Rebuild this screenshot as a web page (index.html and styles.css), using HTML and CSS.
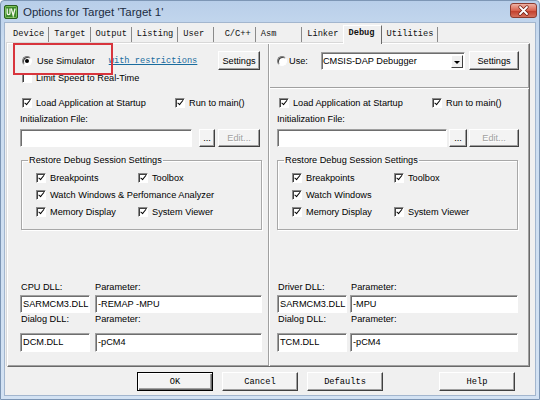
FILE: index.html
```html
<!DOCTYPE html>
<html>
<head>
<meta charset="utf-8">
<title>Options for Target 'Target 1'</title>
<link rel="stylesheet" href="styles.css">
</head>
<body>
<div class="window">
  <div class="titlebar">
    <svg class="app-icon" viewBox="0 0 14 14" width="14" height="14">
      <rect x="0.5" y="0.5" width="13" height="13" rx="1.5" fill="#3f8a2e" stroke="#2b5f1f"/>
      <rect x="1.5" y="1.5" width="11" height="11" rx="1" fill="none" stroke="#8fd06a" stroke-width="0.8"/>
      <path d="M3.2 3.5 V8.2 Q3.2 9.6 4.6 9.6 Q6 9.6 6 8.2 V3.5" fill="none" stroke="#f4f8e8" stroke-width="1.3"/>
      <path d="M7.3 3.5 L9.2 10.5 L11.1 3.5" fill="none" stroke="#f4f8e8" stroke-width="1.3"/>
    </svg>
    <span class="title">Options for Target 'Target 1'</span>
    <span class="close-btn">
      <svg viewBox="0 0 27 15" width="27" height="15">
        <path d="M10 4 L17 11 M17 4 L10 11" stroke="#6b1d14" stroke-width="3.2" stroke-linecap="round"/>
        <path d="M10 4 L17 11 M17 4 L10 11" stroke="#ffffff" stroke-width="1.8" stroke-linecap="round"/>
      </svg>
    </span>
  </div>

  <div class="client">
    <div class="tabs">
      <span class="tab tab-first">Device</span>
      <span class="tab">Target</span>
      <span class="tab">Output</span>
      <span class="tab">Listing</span>
      <span class="tab">User&nbsp;</span>
      <span class="tab">&nbsp;C/C++</span>
      <span class="tab">Asm&nbsp;&nbsp;&nbsp;&nbsp;</span>
      <span class="tab tab-prev">Linker</span>
      <span class="tab tab-active">Debug</span>
      <span class="tab">Utilities</span>
    </div>

    <div class="panel">
      <div class="col col-left">
        <div class="row top-row">
          <span class="opt"><span class="radio on"></span>Use Simulator</span>
          <span class="link">with restrictions</span>
          <button class="btn settings-l">Settings</button>
        </div>
        <div class="row limit-row">
          <span class="opt-chk"><span class="check off"></span>Limit Speed to Real-Time</span>
        </div>
        <div class="row load-row">
          <span class="opt-chk first-chk"><span class="check"></span>Load Application at Startup</span>
          <span class="opt-chk"><span class="check"></span>Run to main()</span>
        </div>
        <div class="row label-row">Initialization File:</div>
        <div class="row file-row file-l">
          <span class="field grow"></span>
          <button class="btn browse">...</button>
          <button class="btn edit" disabled>Edit...</button>
        </div>
        <fieldset class="group">
          <legend>Restore Debug Session Settings</legend>
          <div class="group-grid">
            <span class="opt-chk"><span class="check"></span>Breakpoints</span>
            <span class="opt-chk"><span class="check"></span>Toolbox</span>
            <span class="opt-chk span2"><span class="check"></span>Watch Windows &amp; Perfomance Analyzer</span>
            <span class="opt-chk"><span class="check"></span>Memory Display</span>
            <span class="opt-chk"><span class="check"></span>System Viewer</span>
          </div>
        </fieldset>
        <div class="dll dll-l">
          <span class="lbl">CPU DLL:</span>
          <span class="lbl">Parameter:</span>
          <span class="field f1">SARMCM3.DLL</span>
          <span class="field f1">-REMAP -MPU</span>
          <span class="lbl">Dialog DLL:</span>
          <span class="lbl">Parameter:</span>
          <span class="field f2">DCM.DLL</span>
          <span class="field f2">-pCM4</span>
        </div>
      </div>

      <div class="vsep"></div>

      <div class="col col-right">
        <div class="row top-row">
          <span class="opt opt-use"><span class="radio"></span>Use:</span>
          <span class="combo"><span class="combo-text">CMSIS-DAP Debugger</span><span class="combo-btn"></span></span>
          <button class="btn settings-r">Settings</button>
        </div>
        <div class="hsep"></div>
        <div class="row load-row">
          <span class="opt-chk first-chk"><span class="check"></span>Load Application at Startup</span>
          <span class="opt-chk"><span class="check"></span>Run to main()</span>
        </div>
        <div class="row label-row">Initialization File:</div>
        <div class="row file-row file-r">
          <span class="field grow"></span>
          <button class="btn browse">...</button>
          <button class="btn edit" disabled>Edit...</button>
        </div>
        <fieldset class="group">
          <legend>Restore Debug Session Settings</legend>
          <div class="group-grid">
            <span class="opt-chk"><span class="check"></span>Breakpoints</span>
            <span class="opt-chk"><span class="check"></span>Toolbox</span>
            <span class="opt-chk span2"><span class="check"></span>Watch Windows</span>
            <span class="opt-chk"><span class="check"></span>Memory Display</span>
            <span class="opt-chk"><span class="check"></span>System Viewer</span>
          </div>
        </fieldset>
        <div class="dll dll-r">
          <span class="lbl">Driver DLL:</span>
          <span class="lbl">Parameter:</span>
          <span class="field f1">SARMCM3.DLL</span>
          <span class="field f1">-MPU</span>
          <span class="lbl">Dialog DLL:</span>
          <span class="lbl">Parameter:</span>
          <span class="field f2">TCM.DLL</span>
          <span class="field f2">-pCM4</span>
        </div>
      </div>

      <div class="highlight"></div>
    </div>

    <div class="buttons">
      <button class="btn dlg-btn default">OK</button>
      <button class="btn dlg-btn">Cancel</button>
      <button class="btn dlg-btn">Defaults</button>
      <button class="btn dlg-btn help">Help</button>
    </div>
  </div>
</div>
</body>
</html>
```

FILE: styles.css
```css
html, body {
  margin: 0;
  padding: 0;
  background: #ffffff;
}

.window {
  width: 540px;
  height: 400px;
  box-sizing: border-box;
  border: 1px solid #7d96b5;
  border-radius: 4px 4px 0 0;
  background: linear-gradient(#b8cee9, #cadcf0 40px, #d3e2f3);
  display: flex;
  flex-direction: column;
  font-family: "Liberation Sans", Arial, sans-serif;
  font-size: 9.2px;
  color: #000;
  overflow: hidden;
}

/* title bar */
.titlebar {
  height: 22px;
  flex: none;
  display: flex;
  align-items: center;
  padding: 0 2px 0 3px;
}
.app-icon {
  display: block;
  flex: none;
}
.title {
  margin-left: 5px;
  font-size: 11.5px;
  color: #1c2c42;
}
.close-btn {
  margin-left: auto;
  align-self: flex-start;
  margin-top: 2px;
  width: 27px;
  height: 15px;
  box-sizing: border-box;
  border: 1px solid #8c3b2f;
  border-radius: 3px;
  background: linear-gradient(#eeb2a4, #d9634f 50%, #c2402d 55%, #d5705c);
  overflow: hidden;
}
.close-btn svg {
  display: block;
  margin: -1px;
}

/* client area */
.client {
  flex: 1;
  margin: 0 4px 4px;
  background: #f0f0f0;
  display: flex;
  flex-direction: column;
  box-shadow: 0 0 0 1px #a3b6ce;
}

/* tabs */
.tabs {
  height: 20px;
  flex: none;
  display: flex;
  align-items: flex-end;
  padding-left: 2px;
  font-family: "Liberation Mono", "Courier New", monospace;
  font-size: 8.7px;
}
.tab {
  height: 15px;
  line-height: 15px;
  margin-bottom: 1px;
  padding: 0 4px 0 5px;
  border-right: 1px solid #8a8a8a;
  white-space: pre;
  color: #111;
}
.tab-first {
  padding-left: 6px;
}
.tab-prev {
  border-right-color: transparent;
}
.tab-active {
  height: 18px;
  line-height: 15px;
  margin-bottom: -1px;
  padding: 0 6px 0 4px;
  border-left: 1px solid #ffffff;
  border-top: 1px solid #ffffff;
  border-right: 1px solid #6a6a6a;
  background: #f0f0f0;
  position: relative;
  z-index: 1;
  font-weight: bold;
}

/* tab page */
.panel {
  height: 324px;
  flex: none;
  box-sizing: border-box;
  margin: 0 5px 0 2px;
  border: 1px solid;
  border-color: #ffffff #696969 #696969 #ffffff;
  box-shadow: inset -1px -1px 0 #a0a0a0, -1px -1px 0 #d8d8d8;
  display: flex;
  position: relative;
}

.col {
  display: flex;
  flex-direction: column;
  padding-top: 6px;
  padding-bottom: 14px;
  box-sizing: border-box;
}
.col-left {
  width: 260px;
  padding-left: 12px;
  padding-right: 6px;
}
.col-right {
  flex: 1;
  padding-left: 7px;
  padding-right: 11px;
}
.vsep {
  width: 1px;
  flex: none;
  background: #a0a0a0;
  border-right: 1px solid #ffffff;
}
.hsep {
  height: 1px;
  background: #a0a0a0;
  border-bottom: 1px solid #ffffff;
  margin: 16px -11px 0 -7px;
}

.row {
  display: flex;
  align-items: center;
}
.top-row {
  height: 21px;
}
.limit-row {
  height: 13px;
}
.load-row {
  height: 14px;
  margin-top: 12px;
}
.col-right .load-row {
  margin-top: 7px;
}
.label-row {
  height: 12px;
  margin-top: 3px;
}
.file-row {
  height: 18px;
  margin-top: 4px;
}

/* radio & check */
.opt, .opt-chk {
  display: flex;
  align-items: center;
  white-space: nowrap;
}
.opt {
  margin-left: 2px;
  gap: 5px;
}
.opt-use {
  gap: 2px;
  margin-left: 0;
}
.opt-chk {
  gap: 4px;
}
.load-row .opt-chk,
.limit-row .opt-chk {
  margin-left: 2px;
}
.first-chk {
  width: 151px;
}
.radio {
  width: 10px;
  height: 10px;
  box-sizing: border-box;
  border-radius: 50%;
  border: 1px solid;
  border-color: #7a7a7a #ffffff #ffffff #7a7a7a;
  background: #ffffff;
  box-shadow: inset 1px 1px 0 #404040;
  position: relative;
  flex: none;
}
.radio.on::after {
  content: "";
  position: absolute;
  left: 2px;
  top: 2px;
  width: 4px;
  height: 4px;
  border-radius: 50%;
  background: #000;
}
.check {
  width: 10px;
  height: 10px;
  box-sizing: border-box;
  border: 1px solid;
  border-color: #8a8a8a #ffffff #ffffff #8a8a8a;
  box-shadow: inset 1px 1px 0 #404040;
  background: #ffffff;
  position: relative;
  flex: none;
}
.check::after {
  content: "";
  position: absolute;
  left: 2.6px;
  top: 0.4px;
  width: 2.2px;
  height: 4.6px;
  border: solid #000;
  border-width: 0 1.8px 1.8px 0;
  transform: rotate(40deg);
}
.check.off::after {
  display: none;
}

.link {
  margin-left: 14px;
  font-family: "Liberation Mono", "Courier New", monospace;
  font-size: 8.7px;
  color: #1a6c9e;
  text-decoration: underline;
  white-space: nowrap;
}

/* buttons */
.btn {
  font-family: "Liberation Sans", Arial, sans-serif;
  font-size: 9.2px;
  color: #000;
  background: #f3f3f3;
  border: 1px solid;
  border-color: #ffffff #404040 #404040 #ffffff;
  box-shadow: inset -1px -1px 0 #a0a0a0;
  padding: 0;
  margin: 0;
  box-sizing: border-box;
  height: 19px;
  flex: none;
}
.settings-l {
  margin-left: auto;
  margin-right: 2px;
  width: 42px;
}
.settings-r {
  margin-left: auto;
  margin-right: -1px;
  width: 50px;
}
.browse {
  height: 18px;
  width: 16px;
}
.edit {
  height: 18px;
  width: 42px;
  color: #a0a0a0;
  text-shadow: 1px 1px 0 #ffffff;
}
.file-l .browse {
  margin-left: 7px;
}
.file-l .edit {
  margin-left: 3px;
  margin-right: 2px;
}
.file-r .browse {
  margin-left: 2px;
  width: 18px;
}
.file-r .edit {
  margin-left: 2px;
  width: 50px;
  margin-right: -1px;
}

/* inputs */
.field {
  display: block;
  box-sizing: border-box;
  background: #ffffff;
  border: 1px solid;
  border-color: #a0a0a0 #ffffff #ffffff #a0a0a0;
  box-shadow: inset 1px 1px 0 #6e6e6e;
  padding: 0 0 0 2px;
  height: 18px;
  line-height: 16px;
  white-space: nowrap;
  overflow: hidden;
}
.grow {
  flex: 1;
}

/* combo */
.combo {
  margin-left: 13px;
  width: 144px;
  height: 18px;
  box-sizing: border-box;
  background: #ffffff;
  border: 1px solid;
  border-color: #a0a0a0 #ffffff #ffffff #a0a0a0;
  box-shadow: inset 1px 1px 0 #6e6e6e;
  display: flex;
  align-items: stretch;
  padding: 2px 1px 1px 1px;
}
.combo-text {
  flex: 1;
  line-height: 13px;
}
.combo-btn {
  width: 12px;
  box-sizing: border-box;
  background: #f0f0f0;
  border: 1px solid;
  border-color: #ffffff #404040 #404040 #ffffff;
  position: relative;
}
.combo-btn::after {
  content: "";
  position: absolute;
  left: 2px;
  top: 5px;
  border-left: 3px solid transparent;
  border-right: 3px solid transparent;
  border-top: 3px solid #000;
}

/* group box */
.group {
  margin: 7px 0 0 1px;
  padding: 0;
  min-width: 0;
  border: 1px solid #a8a8a8;
  box-shadow: inset 1px 1px 0 #ffffff, 1px 1px 0 #ffffff;
}
.col-right .group {
  margin-left: 0;
}
.group legend {
  margin-left: 6px;
  padding: 0 1px;
  line-height: 12px;
}
.group-grid {
  display: grid;
  grid-template-columns: 102px auto;
  grid-auto-rows: 17px;
  align-items: center;
  padding: 3px 0 9px 14px;
}
.span2 {
  grid-column: 1 / span 2;
}

/* DLL block */
.dll {
  margin-top: auto;
  display: grid;
  grid-template-columns: 70px 1fr;
  column-gap: 5px;
}
.dll-r {
  column-gap: 3px;
}
.lbl {
  height: 12px;
  line-height: 12px;
  margin-left: 1px;
}
.dll .f1 {
  margin-top: 2px;
  height: 18px;
}
.dll .f2 {
  margin-top: 8px;
  height: 19px;
  line-height: 17px;
}
.dll-l .lbl:nth-child(2),
.dll-l .lbl:nth-child(6) {
  margin-left: 0;
}

/* red annotation */
.highlight {
  position: absolute;
  left: 5px;
  top: -1px;
  width: 100px;
  height: 32px;
  box-sizing: border-box;
  border: 2px solid #d8353d;
  z-index: 2;
}

/* dialog buttons */
.buttons {
  flex: none;
  display: flex;
  justify-content: flex-end;
  gap: 9px;
  padding: 5px 20px 0 0;
}
.dlg-btn {
  width: 76px;
  height: 19px;
  font-family: "Liberation Mono", "Courier New", monospace;
  font-size: 8.7px;
}
.dlg-btn.default {
  border-color: #000;
  box-shadow: inset 1px 1px 0 #ffffff, inset -1px -1px 0 #696969, inset -2px -2px 0 #a0a0a0;
}
.help {
  margin-left: 47px;
}
```
